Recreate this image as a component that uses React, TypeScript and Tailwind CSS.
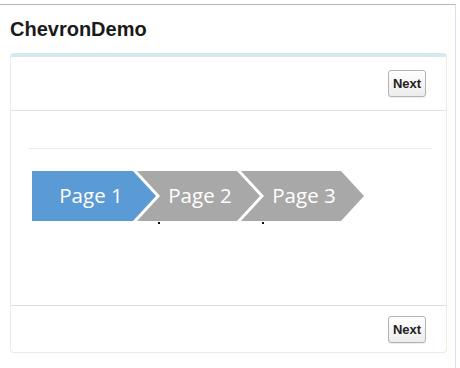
import React from 'react';

function NextButton() {
  return (
    <button
      type="button"
      className="h-[27px] w-[38px] rounded-[3px] border border-[#b4b4b4] bg-gradient-to-b from-white to-[#ececec] text-[13px] font-bold leading-none text-[#222] shadow-[0_1px_1px_rgba(0,0,0,0.08)]"
      style={{ fontFamily: 'Arial, "Liberation Sans", sans-serif' }}
    >
      Next
    </button>
  );
}

function Chevrons() {
  const pages = [
    { label: 'Page 1', fill: '#5b9bd5', x: 0, first: true },
    { label: 'Page 2', fill: '#a8a8a8', x: 105, first: false },
    { label: 'Page 3', fill: '#a8a8a8', x: 209, first: false },
  ];
  return (
    <svg width="334" height="54" viewBox="0 0 334 54" className="block">
      {pages.map((p) => {
        const x = p.x;
        const pts = p.first
          ? `${x},0 ${x + 101},0 ${x + 124},25 ${x + 101},50 ${x},50`
          : `${x},0 ${x + 100},0 ${x + 123},25 ${x + 100},50 ${x},50 ${x + 23},25`;
        return <polygon key={p.label} points={pts} fill={p.fill} />;
      })}
      {pages.map((p, i) => (
        <text
          key={p.label + 't'}
          x={[59, 168, 272][i]}
          y={32}
          textAnchor="middle"
          fill="#ffffff"
          fontSize="20.5"
          fontFamily='"Open Sans", "Noto Sans", sans-serif'
        >
          {p.label}
        </text>
      ))}
      <rect x="126" y="51" width="2" height="2" fill="#111" />
      <rect x="230" y="51" width="2" height="2" fill="#111" />
    </svg>
  );
}

export default function App() {
  return (
    <div className="h-[368px] w-[460px] bg-white">
      <div className="ml-0 mt-1 h-[364px] w-[456px] border-r border-t border-r-[#e6d9ef] border-t-[#b8b8b8]">
        <h1
          className="ml-[10px] pt-3 text-[20px] font-bold leading-[24px] text-[#1a1a1a]"
          style={{ fontFamily: 'Arial, "Liberation Sans", sans-serif' }}
        >
          ChevronDemo
        </h1>
        <div className="ml-[10px] mt-3 w-[437px] overflow-hidden rounded-[4px] border border-[#ebebdf] border-t-[4px] border-t-[#d4e9f2]">
          <div className="flex h-[54px] items-center justify-end border-b border-[#e2e2e2] pr-[20px]">
            <NextButton />
          </div>
          <div className="h-[194px] pt-[37px]">
            <div className="ml-[17px] mr-[14px] h-px bg-[#ebebeb]" />
            <div className="ml-[21px] mt-[22px]">
              <Chevrons />
            </div>
          </div>
          <div className="flex h-[47px] items-center justify-end border-t border-[#dcdcdc] pr-[20px]">
            <NextButton />
          </div>
        </div>
      </div>
    </div>
  );
}
